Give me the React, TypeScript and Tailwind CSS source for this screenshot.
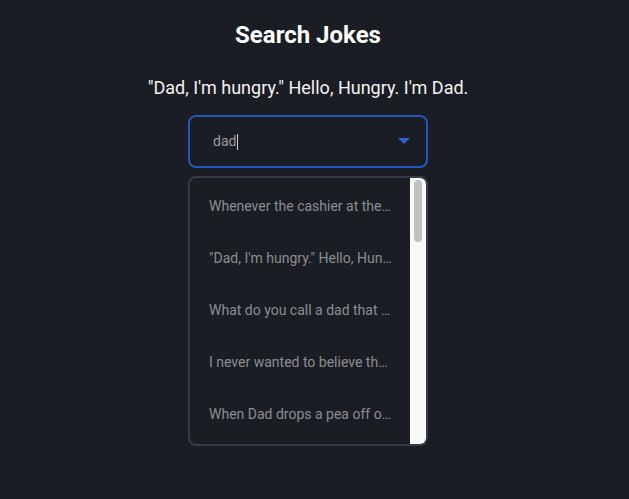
import React from "react";

const jokes = [
	"Whenever the cashier at the grocery store asks my dad if he would like the milk in a bag he replies, 'No, just leave it in the carton!'",
	"\"Dad, I'm hungry.\" Hello, Hungry. I'm Dad.",
	"What do you call a dad that has fallen through the ice? A Popsicle.",
	"I never wanted to believe that my Dad was stealing from his job as a road worker. But when I got home, all the signs were there.",
	"When Dad drops a pea off of his plate 'oh dear I've pea'd on the floor'",
];

const JokeRow = (props: { text: string }) => {
	return <li className="h-[52px] flex items-center pl-[19px] pr-[18px]">
		<span className="truncate text-[14px] text-[#8c8d91]">{props.text}</span>
	</li>
};

export default function App(): JSX.Element {
	return (
		<div className="w-full h-[499px] bg-[#1a1d24]" style={{ fontFamily: "Roboto, 'Liberation Sans', sans-serif" }}>
			<div className="w-[616px] flex flex-col items-center">
				<h1 className="mt-[20px] text-[24px] leading-[30px] font-bold text-white">Search Jokes</h1>
				<p className="mt-[27px] text-[18px] leading-[22px] text-[#f2f2f2]">"Dad, I'm hungry." Hello, Hungry. I'm Dad.</p>
				<div className="mt-[16px] w-[240px] h-[53px] shrink-0 border-2 border-[#2456bd] rounded-[8px] flex items-center pl-[23px] pr-[16px]">
					<span className="text-[14px] text-[#9a9ba0] flex-1 flex items-center">
						dad<span className="inline-block w-px h-[16px] bg-[#d0d0d0] ml-[1px]"></span>
					</span>
					<svg width="12" height="7" viewBox="0 0 12 7">
						<path d="M0 0 L12 0 L6 6 Z" fill="#2c61cf" />
					</svg>
				</div>
				<div className="mt-[8px] w-[240px] h-[270px] shrink-0 border-2 border-[#363b4a] rounded-[8px] flex overflow-hidden">
					<ul className="flex-1 min-w-0 pt-[2px]">
						{jokes.map((j, i) => <JokeRow key={i} text={j} />)}
					</ul>
					<div className="w-[16px] bg-[#f8f8f8] pt-[2px] flex justify-center">
						<div className="w-[8px] h-[62px] rounded-[4px] bg-[#c1c1c1]"></div>
					</div>
				</div>
			</div>
		</div>
	);
}
